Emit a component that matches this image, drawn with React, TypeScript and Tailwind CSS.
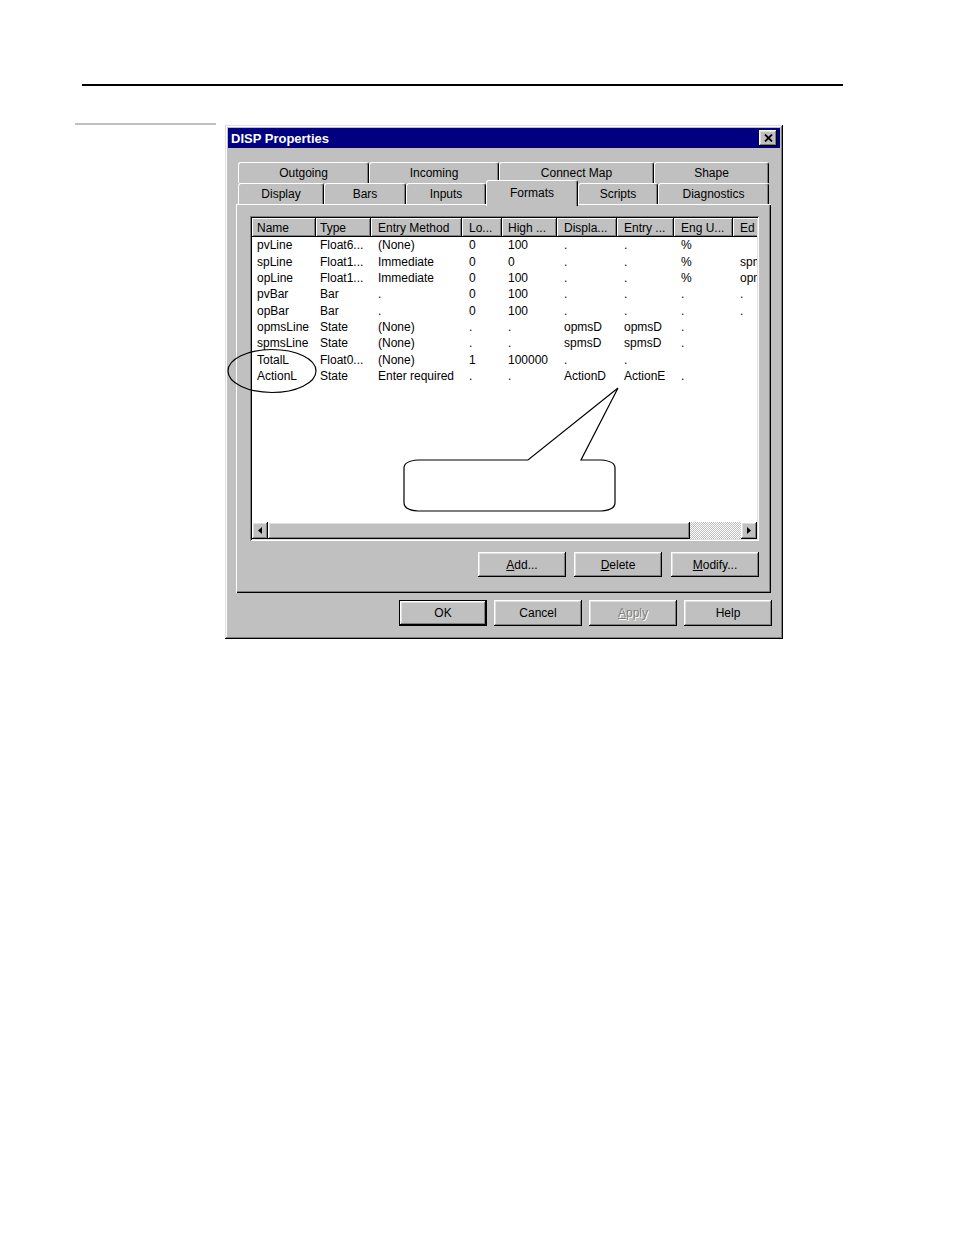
import React from "react";

const raised =
  "shadow-[inset_-1px_-1px_0_#000,inset_1px_1px_0_#fff,inset_-2px_-2px_0_#808080,inset_2px_2px_0_#dfdfdf]";
const raisedThin = "shadow-[inset_-1px_-1px_0_#000,inset_1px_1px_0_#fff,inset_-2px_-2px_0_#808080]";
const sunken =
  "shadow-[inset_1px_1px_0_#808080,inset_-1px_-1px_0_#fff,inset_2px_2px_0_#000,inset_-2px_-2px_0_#dfdfdf]";

const cols = [
  { label: "Name", w: "w-[64px]", pl: "pl-[5px]" },
  { label: "Type", w: "w-[55px]", pl: "pl-[4px]" },
  { label: "Entry Method", w: "w-[91px]", pl: "pl-[7px]" },
  { label: "Lo...", w: "w-[40px]", pl: "pl-[7px]" },
  { label: "High ...", w: "w-[55px]", pl: "pl-[6px]" },
  { label: "Displa...", w: "w-[60px]", pl: "pl-[7px]" },
  { label: "Entry ...", w: "w-[57px]", pl: "pl-[7px]" },
  { label: "Eng U...", w: "w-[59px]", pl: "pl-[7px]" },
  { label: "Ed", w: "w-[60px]", pl: "pl-[7px]" },
];

const rows = [
  ["pvLine", "Float6...", "(None)", "0", "100", ".", ".", "%", ""],
  ["spLine", "Float1...", "Immediate", "0", "0", ".", ".", "%", "spmsD"],
  ["opLine", "Float1...", "Immediate", "0", "100", ".", ".", "%", "opmsD"],
  ["pvBar", "Bar", ".", "0", "100", ".", ".", ".", "."],
  ["opBar", "Bar", ".", "0", "100", ".", ".", ".", "."],
  ["opmsLine", "State", "(None)", ".", ".", "opmsD", "opmsD", ".", ""],
  ["spmsLine", "State", "(None)", ".", ".", "spmsD", "spmsD", ".", ""],
  ["TotalL", "Float0...", "(None)", "1", "100000", ".", ".", "", ""],
  ["ActionL", "State", "Enter required", ".", ".", "ActionD", "ActionE", ".", ""],
];

function Tab({ w, label }: { w: string; label: string }) {
  return (
    <div
      className={`${w} h-full shrink-0 flex items-center justify-center rounded-t-[3px] border-l border-t border-r border-l-white border-t-white border-r-black shadow-[inset_-1px_0_0_#808080]`}
    >
      {label}
    </div>
  );
}

function Button({ children, w = "w-[88px]", h = "h-[25px]", def = false }: { children: React.ReactNode; w?: string; h?: string; def?: boolean }) {
  return (
    <div className={`${w} ${h} flex items-center justify-center ${def ? "border border-black" : ""}`}>
      <div className={`w-full h-full flex items-center justify-center ${raised}`}>{children}</div>
    </div>
  );
}

function Arrow({ dir }: { dir: "left" | "right" }) {
  return (
    <div className={`w-[16px] h-full shrink-0 bg-[#c0c0c0] flex items-center justify-center ${raised}`}>
      <svg width="4" height="7" viewBox="0 0 4 7">
        {dir === "left" ? <path d="M4 0 L0 3.5 L4 7 Z" fill="#000" /> : <path d="M0 0 L4 3.5 L0 7 Z" fill="#000" />}
      </svg>
    </div>
  );
}

export default function App() {
  return (
    <div className="relative w-[954px] h-[1235px] bg-white text-black font-['Liberation_Sans',Arial,sans-serif] text-[12px] overflow-hidden">
      <div className="pt-[84px]">
        <div className="ml-[82px] w-[761px] h-[2px] bg-black" />
        <div className="mt-[37px] flex items-start">
          <div className="ml-[75px] w-[141px] h-[2px] bg-[#c0c0c0]" />
          <div className={`ml-[9px] mt-[2px] w-[558px] h-[514px] bg-[#c0c0c0] p-[3px] flex flex-col shadow-[inset_-1px_-1px_0_#000,inset_1px_1px_0_#dfdfdf,inset_-2px_-2px_0_#808080,inset_2px_2px_0_#fff]`}>
            {/* title bar */}
            <div className="h-[20px] bg-[#000080] flex items-center justify-between pl-[3px] pr-[3px]">
              <span className="text-white font-bold text-[13px] leading-none">DISP Properties</span>
              <div className={`w-[18px] h-[16px] bg-[#c0c0c0] flex items-center justify-center ${raised}`}>
                <svg width="9" height="8" viewBox="0 0 9 8">
                  <path d="M1 0.5 L8 7.5 M8 0.5 L1 7.5" stroke="#000" strokeWidth="1.8" />
                </svg>
              </div>
            </div>

            {/* tabs */}
            <div className="mt-[14px] ml-[10px] flex flex-col">
              <div className="flex h-[21px]">
                <Tab w="w-[131px]" label="Outgoing" />
                <Tab w="w-[130px]" label="Incoming" />
                <Tab w="w-[155px]" label="Connect Map" />
                <Tab w="w-[115px]" label="Shape" />
              </div>
              <div className="flex h-[21px] items-end">
                <Tab w="w-[86px]" label="Display" />
                <Tab w="w-[82px]" label="Bars" />
                <Tab w="w-[80px]" label="Inputs" />
                <div className="relative z-10 w-[92px] h-[26px] -mb-[2px] shrink-0 bg-[#c0c0c0] flex justify-center pt-[3px] rounded-t-[3px] border-l border-t border-r border-l-white border-t-white border-r-black shadow-[inset_-1px_0_0_#808080]">
                  Formats
                </div>
                <Tab w="w-[80px]" label="Scripts" />
                <Tab w="w-[111px]" label="Diagnostics" />
              </div>
            </div>

            {/* panel */}
            <div className={`ml-[8px] w-[535px] h-[389px] flex flex-col shadow-[inset_1px_1px_0_#fff,inset_-1px_-1px_0_#000,inset_-2px_-2px_0_#808080]`}>
              <div className={`ml-[14px] mt-[12px] w-[509px] h-[325px] bg-white p-[2px] ${sunken}`}>
                <div className="w-full h-full flex flex-col overflow-hidden">
                  <div className="flex h-[19px] shrink-0 bg-[#c0c0c0]">
                    {cols.map((c) => (
                      <div key={c.label} className={`${c.w} ${c.pl} shrink-0 h-full flex items-center whitespace-nowrap ${raisedThin}`}>
                        {c.label}
                      </div>
                    ))}
                  </div>
                  <div className="flex-1 flex flex-col">
                    {rows.map((r, i) => (
                      <div key={i} className="flex h-[16.375px] shrink-0 items-center">
                        {cols.map((c, j) => (
                          <div key={j} className={`${c.w} ${c.pl} shrink-0 whitespace-nowrap overflow-hidden leading-[16px]`}>
                            {r[j]}
                          </div>
                        ))}
                      </div>
                    ))}
                  </div>
                  <div className="h-[17px] shrink-0 flex">
                    <Arrow dir="left" />
                    <div className={`w-[422px] h-full shrink-0 bg-[#c0c0c0] ${raised}`} />
                    <div className="flex-1 h-full bg-[repeating-conic-gradient(#c0c0c0_0%_25%,#ffffff_0%_50%)] bg-[length:2px_2px]" />
                    <Arrow dir="right" />
                  </div>
                </div>
              </div>
              <div className="mt-[11px] flex justify-end pr-[12px]">
                <Button>
                  <span><span className="underline">A</span>dd...</span>
                </Button>
                <div className="ml-[8px]">
                  <Button>
                    <span><span className="underline">D</span>elete</span>
                  </Button>
                </div>
                <div className="ml-[9px]">
                  <Button>
                    <span><span className="underline">M</span>odify...</span>
                  </Button>
                </div>
              </div>
            </div>

            {/* bottom buttons */}
            <div className="mt-[7px] flex justify-end pr-[8px] gap-[7px]">
              <Button h="h-[26px]" def>OK</Button>
              <Button h="h-[26px]">Cancel</Button>
              <Button h="h-[26px]">
                <span className="text-[#808080] [text-shadow:1px_1px_0_#fff]"><span className="underline">A</span>pply</span>
              </Button>
              <Button h="h-[26px]">Help</Button>
            </div>
          </div>
        </div>
      </div>

      {/* annotations drawn over the dialog */}
      <svg className="absolute left-0 top-0 pointer-events-none" width="954" height="1235" viewBox="0 0 954 1235">
        <ellipse cx="272" cy="371" rx="44" ry="21.5" fill="none" stroke="#000" strokeWidth="1.2" />
        <path
          d="M418 460 L528 460 L618 388 L581 460 L601 460 Q615 461 615 468 L615 503 Q615 510 601 511 L418 511 Q404 510 404 503 L404 468 Q404 461 418 460 Z"
          fill="#fff"
          stroke="#000"
          strokeWidth="1.2"
        />
      </svg>
    </div>
  );
}
